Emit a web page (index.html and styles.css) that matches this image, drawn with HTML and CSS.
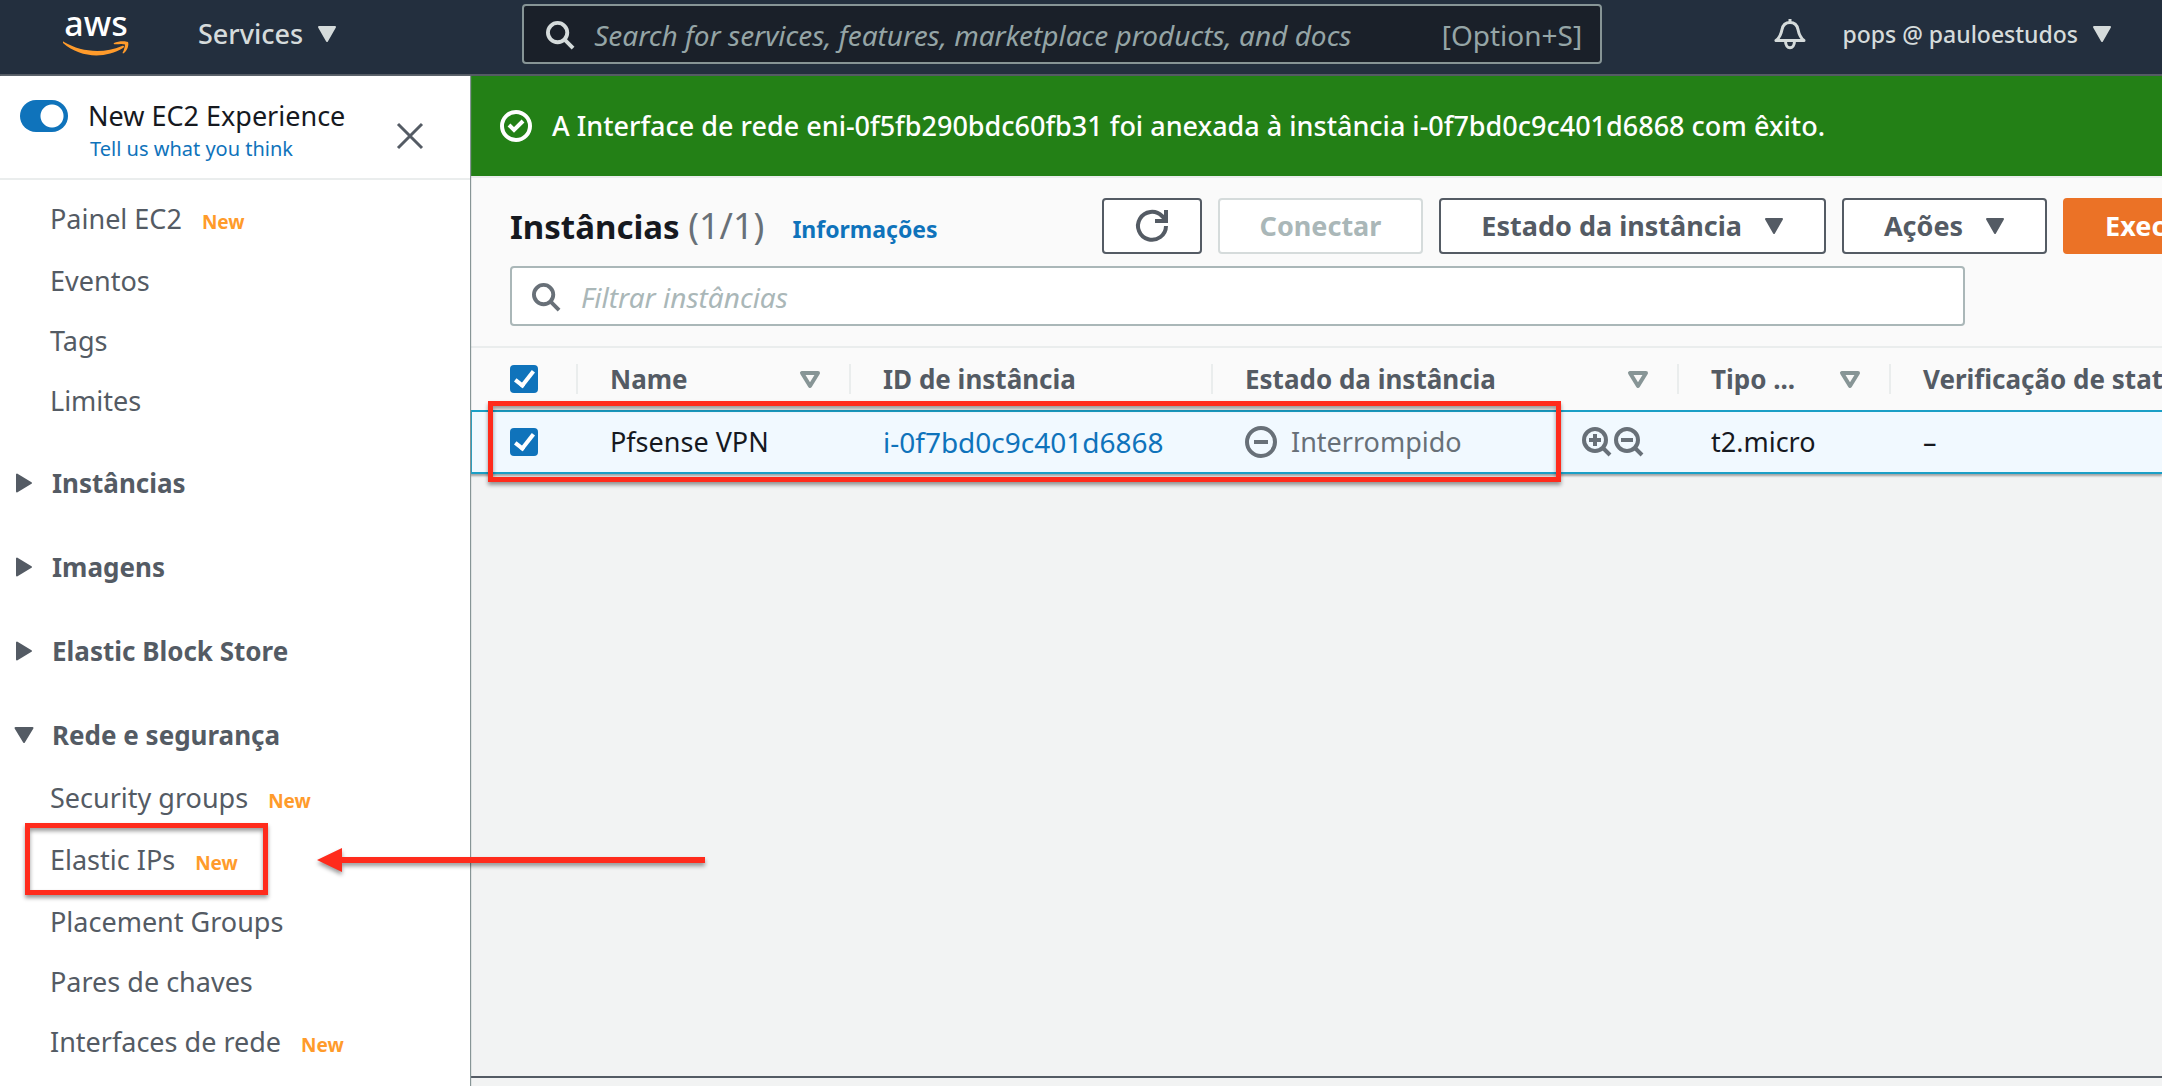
FILE: index.html
```html
<!DOCTYPE html>
<html lang="pt-BR">
<head>
<meta charset="utf-8">
<title>Instâncias | EC2</title>
<link rel="stylesheet" href="styles.css">
</head>
<body>
<header class="topbar">
  <a class="logo" href="#" aria-label="AWS">
    <span class="logo-word">aws</span>
    <svg class="logo-smile" viewBox="0 0 66 15" aria-hidden="true"><path d="M1 1C18 11 40 13 59 5c2-1 3 1 1 2C42 18 17 17 0 2c0-1 0-2 1-1z"/><path d="M51 2c4-2 11-2.500 14-1 1 2 0 8-4 11-1 1-2 0-1-1 1-2 2-6 2-7.500-2-1-6-.5-10-.2-1 0-2-.8-1-1.300z"/></svg>
  </a>
  <button class="nav-button nav-services" type="button">Services <svg class="caret" viewBox="0 0 20 17" aria-hidden="true"><path d="M2 1h16L10 15z"/></svg></button>
  <label class="global-search">
    <svg class="search-icon" viewBox="0 0 30 30" aria-hidden="true"><circle cx="12" cy="12" r="10"/><path d="M19 19l9 9"/></svg>
    <input type="text" aria-label="Search" placeholder="Search for services, features, marketplace products, and docs">
    <kbd>[Option+S]</kbd>
  </label>
  <button class="bell" type="button" aria-label="Notifications"><svg viewBox="0 0 32 32" aria-hidden="true"><path d="M2 22.500h28c-4-3-5-6-6-11-1-5-4-7-8-7s-7 2-8 7c-1 5-2 8-6 11zM16 4V1M11.500 23c0 9 9 9 9 0"/></svg></button>
  <button class="nav-button nav-account" type="button">pops @ pauloestudos <svg class="caret" viewBox="0 0 20 17" aria-hidden="true"><path d="M2 1h16L10 15z"/></svg></button>
</header>
<div class="shell">
  <aside class="sidebar">
    <div class="experience">
      <input class="toggle" id="experience" type="checkbox" role="switch" checked>
      <div class="experience-text">
        <label for="experience">New EC2 Experience</label>
        <a href="#">Tell us what you think</a>
      </div>
      <button class="close" type="button" aria-label="Close"><svg viewBox="0 0 28 28" aria-hidden="true"><path d="M2 2l24 24M26 2L2 26"/></svg></button>
    </div>
    <nav class="menu">
      <ul class="links">
        <li class="tagged"><a href="#">Painel EC2</a><span class="new">New</span></li>
        <li><a href="#">Eventos</a></li>
        <li><a href="#">Tags</a></li>
        <li><a href="#">Limites</a></li>
      </ul>
      <div class="groups">
        <button class="group" type="button" aria-expanded="false"><svg class="arrow" viewBox="0 0 20 20" aria-hidden="true"><path d="M3 1.500v17L17 10z"/></svg>Instâncias</button>
        <button class="group" type="button" aria-expanded="false"><svg class="arrow" viewBox="0 0 20 20" aria-hidden="true"><path d="M3 1.500v17L17 10z"/></svg>Imagens</button>
        <button class="group" type="button" aria-expanded="false"><svg class="arrow" viewBox="0 0 20 20" aria-hidden="true"><path d="M3 1.500v17L17 10z"/></svg>Elastic Block Store</button>
        <button class="group" type="button" aria-expanded="true"><svg class="arrow" viewBox="0 0 20 20" aria-hidden="true"><path d="M1.500 3h17L10 17z"/></svg>Rede e segurança</button>
      </div>
      <ul class="links">
        <li class="tagged"><a href="#">Security groups</a><span class="new">New</span></li>
        <li class="tagged marked"><a href="#">Elastic IPs</a><span class="new">New</span>
          <svg class="pointer" viewBox="0 0 394 44" aria-hidden="true"><path d="M4 20L29 8v9h363v6H29v9z"/></svg>
        </li>
        <li><a href="#">Placement Groups</a></li>
        <li><a href="#">Pares de chaves</a></li>
        <li class="tagged"><a href="#">Interfaces de rede</a><span class="new">New</span></li>
      </ul>
    </nav>
  </aside>
  <main class="content">
    <div class="flash" role="status">
      <svg viewBox="0 0 32 32" aria-hidden="true"><circle cx="16" cy="16" r="14"/><path d="M9 15l5 5 9-9"/></svg>
      <span>A Interface de rede eni-0f5fb290bdc60fb31 foi anexada à instância i-0f7bd0c9c401d6868 com êxito.</span>
    </div>
    <section class="panel">
      <div class="panel-head">
        <h1>Instâncias <span>(1/1)</span></h1>
        <a class="info" href="#">Informações</a>
        <div class="actions">
          <button class="btn btn-refresh" type="button" aria-label="Atualizar"><svg viewBox="0 0 34 34" aria-hidden="true"><path d="M31 17a14 14 0 1 1-4-10l4 4M31 1v11H20"/></svg></button>
          <button class="btn" type="button" disabled>Conectar</button>
          <button class="btn" type="button">Estado da instância <svg class="caret" viewBox="0 0 20 17" aria-hidden="true"><path d="M2 1h16L10 15z"/></svg></button>
          <button class="btn" type="button">Ações <svg class="caret" viewBox="0 0 20 17" aria-hidden="true"><path d="M2 1h16L10 15z"/></svg></button>
          <button class="btn btn-primary" type="button">Executar instâncias</button>
        </div>
      </div>
      <label class="filter">
        <svg class="search-icon" viewBox="0 0 30 30" aria-hidden="true"><circle cx="12" cy="12" r="10"/><path d="M19 19l9 9"/></svg>
        <input type="text" aria-label="Filtrar" placeholder="Filtrar instâncias">
      </label>
    </section>
    <div class="table-wrap">
      <table>
        <colgroup><col class="c-check"><col class="c-name"><col class="c-id"><col class="c-state"><col class="c-type"><col></colgroup>
        <thead>
          <tr>
            <th><input class="tick" type="checkbox" aria-label="Selecionar tudo" checked></th>
            <th><div class="th">Name <svg class="sort" viewBox="0 0 20 17" aria-hidden="true"><path d="M2 2h16L10 15z"/></svg></div></th>
            <th><div class="th">ID de instância</div></th>
            <th><div class="th">Estado da instância <svg class="sort" viewBox="0 0 20 17" aria-hidden="true"><path d="M2 2h16L10 15z"/></svg></div></th>
            <th><div class="th">Tipo ... <svg class="sort" viewBox="0 0 20 17" aria-hidden="true"><path d="M2 2h16L10 15z"/></svg></div></th>
            <th><div class="th">Verificação de status</div></th>
          </tr>
        </thead>
        <tbody>
          <tr>
            <td><input class="tick" type="checkbox" aria-label="Selecionar Pfsense VPN" checked></td>
            <td>Pfsense VPN</td>
            <td><a class="instance" href="#">i-0f7bd0c9c401d6868</a></td>
            <td><div class="state">
              <svg class="stopped" viewBox="0 0 32 32" aria-hidden="true"><circle cx="16" cy="16" r="14"/><path d="M9 16h14"/></svg>
              <span>Interrompido</span>
              <span class="zooms">
                <button type="button" aria-label="Incluir no filtro"><svg viewBox="0 0 32 32" aria-hidden="true"><circle cx="14" cy="14" r="11"/><path d="M22 22l7 7M8 14h12M14 8v12"/></svg></button>
                <button type="button" aria-label="Excluir do filtro"><svg viewBox="0 0 32 32" aria-hidden="true"><circle cx="14" cy="14" r="11"/><path d="M22 22l7 7M8 14h12"/></svg></button>
              </span>
            </div></td>
            <td>t2.micro</td>
            <td>–</td>
          </tr>
        </tbody>
      </table>
      <div class="row-mark" aria-hidden="true"></div>
    </div>
    <div class="split"></div>
  </main>
</div>
</body>
</html>
```
FILE: styles.css
```css
* { box-sizing: border-box; }
body {
  margin: 0;
  min-height: 100vh;
  display: flex;
  flex-direction: column;
  overflow: hidden;
  font: 27px/36px "Noto Sans", sans-serif;
  color: #16191f;
  background: #f2f3f3;
}
a { color: #0f73bb; text-decoration: none; }
button, input { font: inherit; }
button { padding: 0; border: 0; background: none; color: inherit; white-space: nowrap; }
svg { display: block; flex: none; overflow: visible; }

.topbar {
  height: 76px;
  flex: none;
  display: flex;
  align-items: center;
  padding: 0 50px 6px 62px;
  background: #232f3e;
  border-bottom: 2px solid #545b64;
  color: #d5dbdb;
}
.logo { width: 68px; display: flex; flex-direction: column; align-items: center; gap: 8px; }
.logo-word { font: 500 34px/20px "Noto Sans", sans-serif; color: #fff; }
.logo-smile { width: 66px; height: 15px; fill: #ff9b2b; }
.nav-button { display: flex; align-items: center; gap: 14px; font-weight: 500; }
.nav-services { margin-left: 68px; }
.caret { width: 20px; height: 17px; fill: currentColor; stroke: currentColor; stroke-width: 2; stroke-linejoin: round; }
.search-icon { width: 29px; height: 29px; fill: none; stroke: currentColor; stroke-width: 4; }
.global-search {
  width: 1080px;
  height: 60px;
  margin-left: 185px;
  padding: 2px 18px 0 22px;
  display: flex;
  align-items: center;
  gap: 19px;
  border: 2px solid #879596;
  border-radius: 4px;
  background: #1a2029;
  font-size: 28px;
}
.global-search input, .filter input { flex: 1; min-width: 0; padding: 0; border: 0; outline: 0; background: none; color: inherit; }
.global-search input::placeholder { color: #95a5a6; font-style: italic; opacity: 1; }
.global-search kbd { font: inherit; color: #95a5a6; }
.bell { margin-left: auto; }
.bell svg { width: 32px; height: 32px; fill: none; stroke: currentColor; stroke-width: 3; stroke-linejoin: round; }
.nav-account { margin-left: 36px; font-size: 23px; }

.shell { flex: 1; display: flex; min-width: 0; }
.sidebar { width: 470px; flex: none; background: #fff; box-shadow: 1px 0 1px #879596; z-index: 1; }
.experience { height: 104px; display: flex; padding: 22px 46px 0 20px; border-bottom: 2px solid #eaeded; }
.toggle {
  appearance: none;
  width: 48px;
  height: 32px;
  margin: 2px 20px 0 0;
  border-radius: 16px;
  background: radial-gradient(circle at 32px 16px, #fff 11px, #0f73bb 12px);
}
.experience-text { display: flex; flex-direction: column; }
.experience-text a { font-size: 20px; line-height: 30px; padding-left: 2px; }
.close { margin: 24px 0 0 auto; align-self: flex-start; }
.close svg { width: 28px; height: 28px; stroke: #545b64; stroke-width: 3; }
.menu { padding: 9px 0 0; color: #545b64; }
.links { list-style: none; margin: 0; padding: 0 0 0 50px; }
.links li { position: relative; width: max-content; height: 60px; padding: 12px 0; display: flex; align-items: baseline; gap: 20px; }
.links .tagged { height: 62px; }
.links a { color: inherit; }
.new { font-size: 19px; font-weight: 700; line-height: 20px; color: #ff9b2b; }
.groups { display: flex; flex-direction: column; align-items: flex-start; gap: 24px; margin: 22px 0 3px; }
.group { display: flex; align-items: center; gap: 18px; height: 60px; padding-left: 14px; font-size: 26px; font-weight: 700; }
.arrow { width: 20px; height: 20px; fill: currentColor; stroke: currentColor; stroke-width: 2; stroke-linejoin: round; }
.marked::before {
  content: "";
  position: absolute;
  inset: -7px -30px -3px -25px;
  border: 5px solid #ff2b1c;
  box-shadow: 0 3px 4px #0006, inset 0 3px 4px #0006;
}
.pointer { position: absolute; left: 263px; top: 10px; width: 394px; height: 44px; fill: #ff2b1c; filter: drop-shadow(0 3px 2px #0006); }

.content { flex: 1; min-width: 0; display: flex; flex-direction: column; overflow: hidden; }
.flash { height: 100px; flex: none; display: flex; align-items: center; gap: 20px; padding-left: 30px; background: #238016; color: #fff; font-weight: 500; white-space: nowrap; }
.flash svg, .stopped { width: 32px; height: 32px; fill: none; stroke: currentColor; stroke-width: 4; }
.panel { padding: 20px 0 20px 40px; border-top: 2px solid #eaeded; background: #fafafa; border-bottom: 2px solid #eaeded; }
.panel-head { display: flex; align-items: center; }
h1 { margin: 0; font-size: 33px; line-height: 48px; font-weight: 700; white-space: nowrap; }
h1 span { font-size: 36px; font-weight: 400; color: #687078; }
.info { margin: 6px 0 0 28px; font-size: 23px; font-weight: 700; }
.actions { margin-left: 164px; display: flex; gap: 16px; }
.btn { height: 56px; padding: 0 40px; display: flex; flex: none; align-items: center; gap: 22px; border: 2px solid #545b64; border-radius: 4px; background: #fff; color: #545b64; font-weight: 700; }
.btn:disabled { color: #aab7b8; border-color: #d5dbdb; }
.btn-refresh { padding: 0 31px; }
.btn-refresh svg { width: 34px; height: 34px; fill: none; stroke: currentColor; stroke-width: 4; }
.btn-primary { border-color: #eb7226; background: #eb7226; color: #fff; }
.filter { height: 60px; margin: 12px 197px 0 0; padding: 2px 20px 0; display: flex; align-items: center; gap: 20px; border: 2px solid #aab7b8; border-radius: 4px; background: #fff; color: #687078; font-size: 28px; }
.filter input::placeholder { color: #aab7b8; font-style: italic; opacity: 1; }

.table-wrap { position: relative; }
table { width: 100%; min-width: 1691px; table-layout: fixed; border-collapse: separate; border-spacing: 0; white-space: nowrap; box-shadow: 0 2px 2px #0005; }
.c-check { width: 106px; }
.c-name { width: 273px; }
.c-id { width: 362px; }
.c-state { width: 466px; }
.c-type { width: 212px; }
th, td { padding: 0 0 0 34px; text-align: left; }
th:first-child { padding-left: 40px; }
td:first-child { padding-left: 38px; border-left: 2px solid #1b9fc6; }
th { height: 62px; background: #fafafa; color: #545b64; font-size: 26px; font-weight: 700; }
.th { height: 30px; display: flex; align-items: center; justify-content: space-between; padding-right: 29px; position: relative; }
.th::before { content: ""; position: absolute; left: -34px; width: 2px; height: 30px; background: #eaeded; }
.sort { width: 20px; height: 17px; fill: none; stroke: #879596; stroke-width: 4; stroke-linejoin: round; }
td { height: 64px; background: #f1f9ff; border-top: 2px solid #1b9fc6; border-bottom: 2px solid #1b9fc6; }
.instance { font-size: 28px; }
.tick { appearance: none; display: block; width: 28px; height: 28px; margin: 0; border-radius: 4px; background: #0f73bb; overflow: hidden; }
.tick::before { content: ""; display: block; box-sizing: border-box; width: 11px; height: 20px; margin: 2px 0 0 9px; border: solid #fff; border-width: 0 4px 4px 0; rotate: 38deg; }
.state { display: flex; align-items: center; gap: 14px; color: #687078; }
.zooms { display: flex; margin-left: auto; padding-right: 32px; }
.zooms svg { width: 32px; height: 32px; fill: none; stroke: currentColor; stroke-width: 4; }
.row-mark { position: absolute; left: 18px; top: 53px; width: 1073px; height: 81px; border: 5px solid #ff2b1c; box-shadow: 0 3px 4px #0006, inset 0 3px 4px #0006; pointer-events: none; }
.split { margin-top: auto; height: 10px; border-top: 2px solid #545b64; background: #f2f3f3; }
```
